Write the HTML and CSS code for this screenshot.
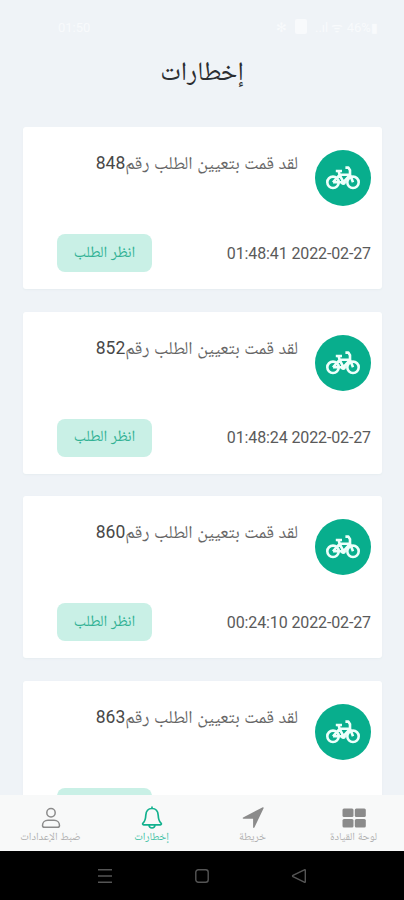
FILE: index.html
```html
<!DOCTYPE html>
<html lang="ar" dir="rtl">
<head>
<meta charset="utf-8">
<title>إخطارات</title>
<link rel="stylesheet" href="styles.css">
</head>
<body>
<svg class="defs" aria-hidden="true">
  <symbol id="bike" viewBox="0 0 36 26">
    <g fill="none" stroke="currentColor" stroke-width="2.6" stroke-linejoin="round">
      <circle cx="8" cy="17.3" r="5.7"/>
      <circle cx="28" cy="17.3" r="5.7"/>
      <path d="M8 17.3h10.300L25 9.800H14.600l3.900 7.500M8 17.300l6.600-7.500-1-3.800M10.800 6h6.200M20.400 2.600h3l1.600 2.600v4.600l3 7.500"/>
    </g>
    <circle cx="18.3" cy="17.3" r="2.6" fill="currentColor"/>
  </symbol>
</svg>
<div class="screen">
  <div class="status" dir="ltr">
    <span class="clock">01:50</span>
    <span class="signals"><i>✻</i><b></b><span>..ıl ᯤ 46%▮</span></span>
  </div>
  <h1><span>إخطارات</span></h1>
  <main>
    <article class="card">
      <div class="top"><div class="avatar"><svg><use href="#bike"/></svg></div><p><span class="msg">لقد قمت بتعيين الطلب رقم</span><span class="num">848</span></p></div>
      <div class="bottom"><time dir="ltr">01:48:41 2022-02-27</time><button><span>انظر الطلب</span></button></div>
    </article>
    <article class="card">
      <div class="top"><div class="avatar"><svg><use href="#bike"/></svg></div><p><span class="msg">لقد قمت بتعيين الطلب رقم</span><span class="num">852</span></p></div>
      <div class="bottom"><time dir="ltr">01:48:24 2022-02-27</time><button><span>انظر الطلب</span></button></div>
    </article>
    <article class="card">
      <div class="top"><div class="avatar"><svg><use href="#bike"/></svg></div><p><span class="msg">لقد قمت بتعيين الطلب رقم</span><span class="num">860</span></p></div>
      <div class="bottom"><time dir="ltr">00:24:10 2022-02-27</time><button><span>انظر الطلب</span></button></div>
    </article>
    <article class="card">
      <div class="top"><div class="avatar"><svg><use href="#bike"/></svg></div><p><span class="msg">لقد قمت بتعيين الطلب رقم</span><span class="num">863</span></p></div>
      <div class="bottom"><time dir="ltr"></time><button></button></div>
    </article>
  </main>
  <nav class="tabs">
    <a><svg viewBox="0 0 26 26"><g fill="currentColor"><rect x="1.5" y="3.5" width="11" height="8.5" rx="1.5"/><rect x="13.8" y="3.5" width="11" height="8.5" rx="1.5"/><rect x="1.5" y="14" width="11" height="8.5" rx="1.5"/><rect x="13.8" y="14" width="11" height="8.5" rx="1.5"/></g></svg><span>لوحة القيادة</span></a>
    <a><svg viewBox="0 0 26 26"><path fill="currentColor" d="M22.8 2.2a.7.7 0 0 1 .8 1L14.4 22.6c-.3.7-1.3.5-1.3-.3v-8.6H3.4c-.8 0-1-1-.3-1.3z"/></svg><span>خريطة</span></a>
    <a class="active"><svg viewBox="0 0 26 26"><path fill="none" stroke="currentColor" stroke-width="1.7" stroke-linecap="round" stroke-linejoin="round" d="M13 2.2v1.3M13 3.5c-4.2 0-6 3.2-6.2 6.8-.2 4.2-1 6.2-2.8 7.8-.8.8-.3 1.7.6 1.7h16.800c.9 0 1.4-.9.6-1.700-1.800-1.600-2.600-3.600-2.800-7.800C19 6.700 17.200 3.500 13 3.500zM10 20c.2 2 1.400 3 3 3s2.800-1 3-3"/></svg><span>إخطارات</span></a>
    <a><svg viewBox="0 0 26 26"><g fill="none" stroke="currentColor" stroke-width="1.5"><circle cx="13" cy="7.8" r="4.2"/><path d="M6.500 22.300h13c1.500 0 2-.7 2-1.800 0-3-2.200-5.200-5.500-5.200h-6c-3.300 0-5.500 2.200-5.500 5.200 0 1.100.5 1.800 2 1.800z"/></g></svg><span>ضبط الإعدادات</span></a>
  </nav>
  <div class="system" dir="ltr">
    <svg viewBox="0 0 16 16"><path d="M1 1.700h14M1 8h14M1 14.300h14"/></svg>
    <svg viewBox="0 0 16 16"><rect x="1.800" y="1.800" width="12.400" height="12.400" rx="2.500"/></svg>
    <svg viewBox="0 0 16 16"><path d="M14.300 2.300v11.400c0 .6-.5.8-1 .5L2 8.600q-.9-.6 0-1.200L13.300 1.800c.5-.3 1-.1 1 .5z"/></svg>
  </div>
</div>
</body>
</html>
```
FILE: styles.css
```css
* { box-sizing: border-box; }
body { margin: 0; font-family: Roboto, "Noto Naskh Arabic", "Noto Sans Arabic", "DejaVu Sans", sans-serif; }
.defs { position: absolute; width: 0; height: 0; }
.screen { width: 404px; height: 900px; display: flex; flex-direction: column; background: #eff3f7; overflow: hidden; }
.status { flex: none; height: 54px; padding: 19px 26px 0 58px; display: flex; justify-content: space-between; font-size: 13px; line-height: 17px; color: #f8fafc; }
.signals { display: flex; gap: 8px; }
.signals i { font-style: normal; }
.signals b { width: 12px; height: 15px; border-radius: 2px; background: #f8fafc; }
h1 { flex: none; height: 73px; margin: 0; font-size: 26.5px; font-weight: 400; line-height: 34px; text-align: center; color: #2c2e31; }
h1 span { display: inline-block; }
main { flex: 1; min-height: 0; overflow: hidden; padding: 0 22px 0 23px; display: flex; flex-direction: column; gap: 22.5px; }
.card { flex: none; height: 162px; padding: 23px 11px 17px 34px; border-radius: 3px; background: #fff; display: flex; flex-direction: column; justify-content: space-between; box-shadow: 0 1px 2px #e6edf0; }
.top { display: flex; gap: 17px; }
.avatar { width: 56px; height: 56px; border-radius: 50%; background: #08ae8d; color: #eefffb; display: grid; place-items: center; flex: none; }
.avatar svg { width: 36px; height: 26px; }
.top p { margin: 0; display: flex; font-size: 18.1px; line-height: 26px; color: #666; white-space: nowrap; }
.num { color: #484848; font-size: 17.5px; }
.bottom { display: flex; justify-content: space-between; align-items: center; }
time { font-size: 16px; color: #5a5a5a; letter-spacing: -0.12px; }
button { width: 95px; height: 38px; padding: 0 0 3px; border: 0; border-radius: 8px; background: #c9f0e6; color: #32b295; font: inherit; font-size: 15.7px; line-height: 34px; white-space: nowrap; }
.tabs { flex: none; height: 56px; background: #f8f9f9; display: grid; grid-template-columns: repeat(4, 101px); color: #8b8b8b; }
.tabs a { display: flex; flex-direction: column; align-items: center; padding-top: 10px; }
.tabs svg { width: 26px; height: 26px; }
.tabs span { font-size: 11px; line-height: 11px; white-space: nowrap; color: #b0b0b0; }
.tabs .active span { color: #3fc1a5; }
.tabs .active { color: #12b18e; }
.system { flex: none; height: 49px; background: #000; display: flex; align-items: center; justify-content: center; gap: 81px; }
.system svg { width: 16px; height: 16px; fill: none; stroke: #555; stroke-width: 1.4; }
```
